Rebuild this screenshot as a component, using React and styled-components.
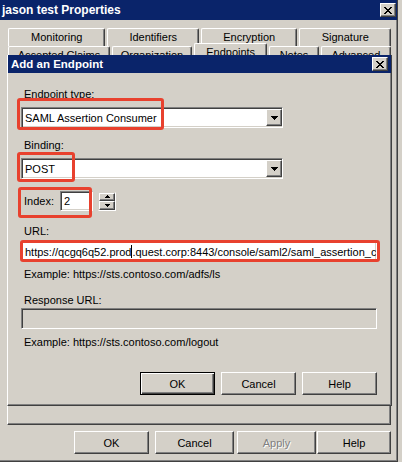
import React from "react";
import styled, { createGlobalStyle, css } from "styled-components";

const C = {
  face: "#d4d0c8",
  light: "#ffffff",
  shadow: "#808080",
  dark: "#404040",
  navy: "#0a246a",
  red: "#e8412e",
};

const GlobalStyle = createGlobalStyle`
  html, body { margin: 0; padding: 0; background: ${C.face}; }
  body {
    font-family: "Liberation Sans", Arial, sans-serif;
    font-size: 11px;
    color: #000;
    overflow: hidden;
  }
  * { box-sizing: border-box; }
`;

const raised = css`
  background: ${C.face};
  border: 1px solid;
  border-color: ${C.light} ${C.dark} ${C.dark} ${C.light};
  box-shadow: inset -1px -1px ${C.shadow};
`;

const sunken = css`
  border: 1px solid;
  border-color: ${C.shadow} ${C.light} ${C.light} ${C.shadow};
  box-shadow: inset 1px 1px ${C.dark}, inset -1px -1px ${C.face};
`;

const Window = styled.div`
  position: relative;
  width: 398px;
  height: 462px;
  display: flex;
  flex-direction: column;
  border-right: 1px solid ${C.dark};
  border-bottom: 1px solid ${C.dark};
  box-shadow: inset -1px -1px ${C.shadow};
`;

const TitleBar = styled.div`
  flex-shrink: 0;
  height: ${(p) => p.$h}px;
  background: ${C.navy};
  color: #fff;
  font-weight: bold;
  font-size: ${(p) => p.$fs}px;
  display: flex;
  align-items: center;
  justify-content: space-between;
  padding: 0 ${(p) => p.$pr}px 0 ${(p) => p.$pl}px;
  white-space: nowrap;
`;

const CaptionButton = styled.div`
  ${raised};
  width: 16px;
  height: 14px;
  display: flex;
  align-items: center;
  justify-content: center;
`;

const CloseGlyph = () => (
  <svg width="8" height="7" viewBox="0 0 8 7" shapeRendering="crispEdges">
    <path
      d="M0 0h2v1h-2zM6 0h2v1h-2zM1 1h2v1h-2zM5 1h2v1h-2zM2 2h4v1h-4zM3 3h2v1h-2zM2 4h4v1h-4zM1 5h2v1h-2zM5 5h2v1h-2zM0 6h2v1h-2zM6 6h2v1h-2z"
      fill="#000"
    />
  </svg>
);

const Body = styled.div`
  flex: 1;
  display: flex;
  flex-direction: column;
  padding: 8px 6px 7px 7px;
`;

const TabRow = styled.div`
  display: flex;
  align-items: flex-end;
  gap: 2px;
  height: 18px;
  margin-left: 1px;
  flex-shrink: 0;
`;

const Tab = styled.div`
  width: ${(p) => p.$w}px;
  height: ${(p) => (p.$active ? 21 : 18)}px;
  background: ${C.face};
  border-top: 1px solid ${C.light};
  border-left: 1px solid ${C.light};
  border-right: 1px solid ${C.dark};
  box-shadow: inset -1px 0 ${C.shadow};
  border-radius: 2px 2px 0 0;
  display: flex;
  justify-content: center;
  padding-top: 2px;
  line-height: 13px;
  white-space: nowrap;
`;

const TabPanel = styled.div`
  flex: 1;
  border: 1px solid;
  border-color: ${C.light} ${C.dark} ${C.dark} ${C.light};
  box-shadow: inset -1px -1px ${C.shadow};
`;

const ButtonRow = styled.div`
  display: flex;
  justify-content: flex-end;
  align-self: stretch;
  margin-top: ${(p) => p.$mt}px;
  padding-right: ${(p) => p.$pr || 0}px;
  flex-shrink: 0;
`;

const Button = styled.div`
  width: ${(p) => p.$w}px;
  height: 23px;
  margin-right: ${(p) => p.$mr || 0}px;
  display: flex;
  align-items: center;
  justify-content: center;
  background: ${C.face};
  border: 1px solid;
  border-color: ${C.light} ${C.dark} ${C.dark} ${C.light};
  box-shadow: inset -1px -1px ${C.shadow};
  color: ${(p) => (p.$disabled ? C.shadow : "#000")};
  text-shadow: ${(p) => (p.$disabled ? `1px 1px ${C.light}` : "none")};
  ${(p) =>
    p.$default &&
    css`
      border-color: #000;
      box-shadow: inset 1px 1px ${C.light}, inset -1px -1px ${C.dark},
        inset -2px -2px ${C.shadow};
    `}
`;

/* ---------- inner dialog ---------- */

const Dialog = styled.div`
  position: absolute;
  left: 7px;
  top: 55px;
  width: 385px;
  height: 351px;
  display: flex;
  flex-direction: column;
  background: ${C.face};
  border-left: 1px solid ${C.light};
  border-right: 1px solid ${C.dark};
  border-bottom: 1px solid ${C.dark};
  box-shadow: inset -1px -1px ${C.shadow};
`;

const Form = styled.div`
  position: relative;
  flex: 1;
  display: flex;
  flex-direction: column;
  align-items: flex-start;
  padding: 0 0 0 13px;
`;

const Label = styled.div`
  height: 13px;
  line-height: 13px;
  padding-left: 3px;
  margin-top: ${(p) => p.$mt}px;
  white-space: nowrap;
`;

const Field = styled.div`
  ${sunken};
  position: relative;
  width: ${(p) => p.$w}px;
  height: ${(p) => p.$h || 21}px;
  margin-top: ${(p) => p.$mt}px;
  background: ${(p) => (p.$disabled ? C.face : "#fff")};
  display: flex;
  align-items: center;
  padding-left: 3px;
  overflow: hidden;
  white-space: nowrap;
  flex-shrink: 0;
`;

const FieldText = styled.span`
  flex: 1;
  overflow: hidden;
  white-space: nowrap;
`;

const Caret = styled.span`
  display: inline-block;
  width: 1px;
  height: 13px;
  background: #000;
  vertical-align: -2px;
`;

const DropButton = styled.div`
  ${raised};
  width: 16px;
  height: 17px;
  display: flex;
  align-items: center;
  justify-content: center;
  flex-shrink: 0;
`;

const Arrow = () => (
  <svg width="7" height="4" viewBox="0 0 7 4" shapeRendering="crispEdges">
    <path d="M0 0h7v1h-7zM1 1h5v1h-5zM2 2h3v1h-3zM3 3h1v1h-1z" fill="#000" />
  </svg>
);

const SmallArrow = ({ up }) => (
  <svg width="5" height="3" viewBox="0 0 5 3" shapeRendering="crispEdges">
    <path d={up ? "M2 0h1v1h-1zM1 1h3v1h-3zM0 2h5v1h-5z" : "M0 0h5v1h-5zM1 1h3v1h-3zM2 2h1v1h-1z"} fill="#000" />
  </svg>
);

const IndexRow = styled.div`
  display: flex;
  align-items: center;
  margin-top: 12px;
  height: 20px;
`;

const IndexLabel = styled.div`
  width: 39px;
  padding-left: 3px;
`;

const Spinner = styled.div`
  margin-left: 5px;
  display: flex;
  flex-direction: column;
  width: 18px;
  height: 19px;
  border: 1px solid ${C.light};
  border-top-color: ${C.face};
  border-left-color: ${C.face};
`;

const SpinButton = styled.div`
  ${raised};
  flex: 1;
  display: flex;
  align-items: center;
  justify-content: center;
`;

const Annotation = styled.div`
  position: absolute;
  left: ${(p) => p.$x}px;
  top: ${(p) => p.$y}px;
  width: ${(p) => p.$w}px;
  height: ${(p) => p.$h}px;
  border: 3px solid ${C.red};
  border-radius: 3px;
  pointer-events: none;
`;

export default function App() {
  return (
    <>
      <GlobalStyle />
      <Window>
        <TitleBar $h={20} $fs={12} $pl={2} $pr={1}>
          <span>jason test Properties</span>
          <CaptionButton>
            <CloseGlyph />
          </CaptionButton>
        </TitleBar>
        <Body>
          <TabRow>
            <Tab $w={98}>Monitoring</Tab>
            <Tab $w={92}>Identifiers</Tab>
            <Tab $w={97}>Encryption</Tab>
            <Tab $w={92}>Signature</Tab>
          </TabRow>
          <TabRow>
            <Tab $w={103}>Accepted Claims</Tab>
            <Tab $w={81}>Organization</Tab>
            <Tab $w={74} $active>
              Endpoints
            </Tab>
            <Tab $w={50}>Notes</Tab>
            <Tab $w={71}>Advanced</Tab>
          </TabRow>
          <TabPanel />
          <ButtonRow $mt={6}>
            <Button $w={75} $mr={6}>
              OK
            </Button>
            <Button $w={79} $mr={3}>
              Cancel
            </Button>
            <Button $w={79} $mr={1} $disabled>
              Apply
            </Button>
            <Button $w={74}>Help</Button>
          </ButtonRow>
        </Body>

        <Dialog>
          <TitleBar $h={18} $fs={11.5} $pl={3} $pr={3}>
            <span>Add an Endpoint</span>
            <CaptionButton>
              <CloseGlyph />
            </CaptionButton>
          </TitleBar>
          <Form>
            <Label $mt={15}>Endpoint type:</Label>
            <Field $w={262} $mt={6}>
              <FieldText>SAML Assertion Consumer</FieldText>
              <DropButton>
                <Arrow />
              </DropButton>
            </Field>
            <Label $mt={11}>Binding:</Label>
            <Field $w={262} $mt={6}>
              <FieldText>POST</FieldText>
              <DropButton>
                <Arrow />
              </DropButton>
            </Field>
            <IndexRow>
              <IndexLabel>Index:</IndexLabel>
              <Field $w={33} $h={20} $mt={0}>
                <FieldText>2</FieldText>
              </Field>
              <Spinner>
                <SpinButton>
                  <SmallArrow up />
                </SpinButton>
                <SpinButton>
                  <SmallArrow />
                </SpinButton>
              </Spinner>
            </IndexRow>
            <Label $mt={14}>URL:</Label>
            <Field $w={356} $h={20} $mt={3}>
              <FieldText>
                https://qcgq6q52.prod
                <Caret />
                .quest.corp:8443/console/saml2/saml_assertion_consumer
              </FieldText>
            </Field>
            <Label $mt={7}>Example: https://sts.contoso.com/adfs/ls</Label>
            <Label $mt={13}>Response URL:</Label>
            <Field $w={356} $mt={1} $disabled />
            <Label $mt={7}>Example: https://sts.contoso.com/logout</Label>
            <ButtonRow $mt={23} $pr={14}>
              <Button $w={75} $mr={6} $default>
                OK
              </Button>
              <Button $w={75} $mr={6}>
                Cancel
              </Button>
              <Button $w={75}>Help</Button>
            </ButtonRow>

            <Annotation $x={9} $y={25} $w={147} $h={32} />
            <Annotation $x={9} $y={79} $w={58} $h={30} />
            <Annotation $x={10} $y={114} $w={74} $h={31} />
            <Annotation $x={12} $y={167} $w={360} $h={22} />
          </Form>
        </Dialog>
      </Window>
    </>
  );
}
